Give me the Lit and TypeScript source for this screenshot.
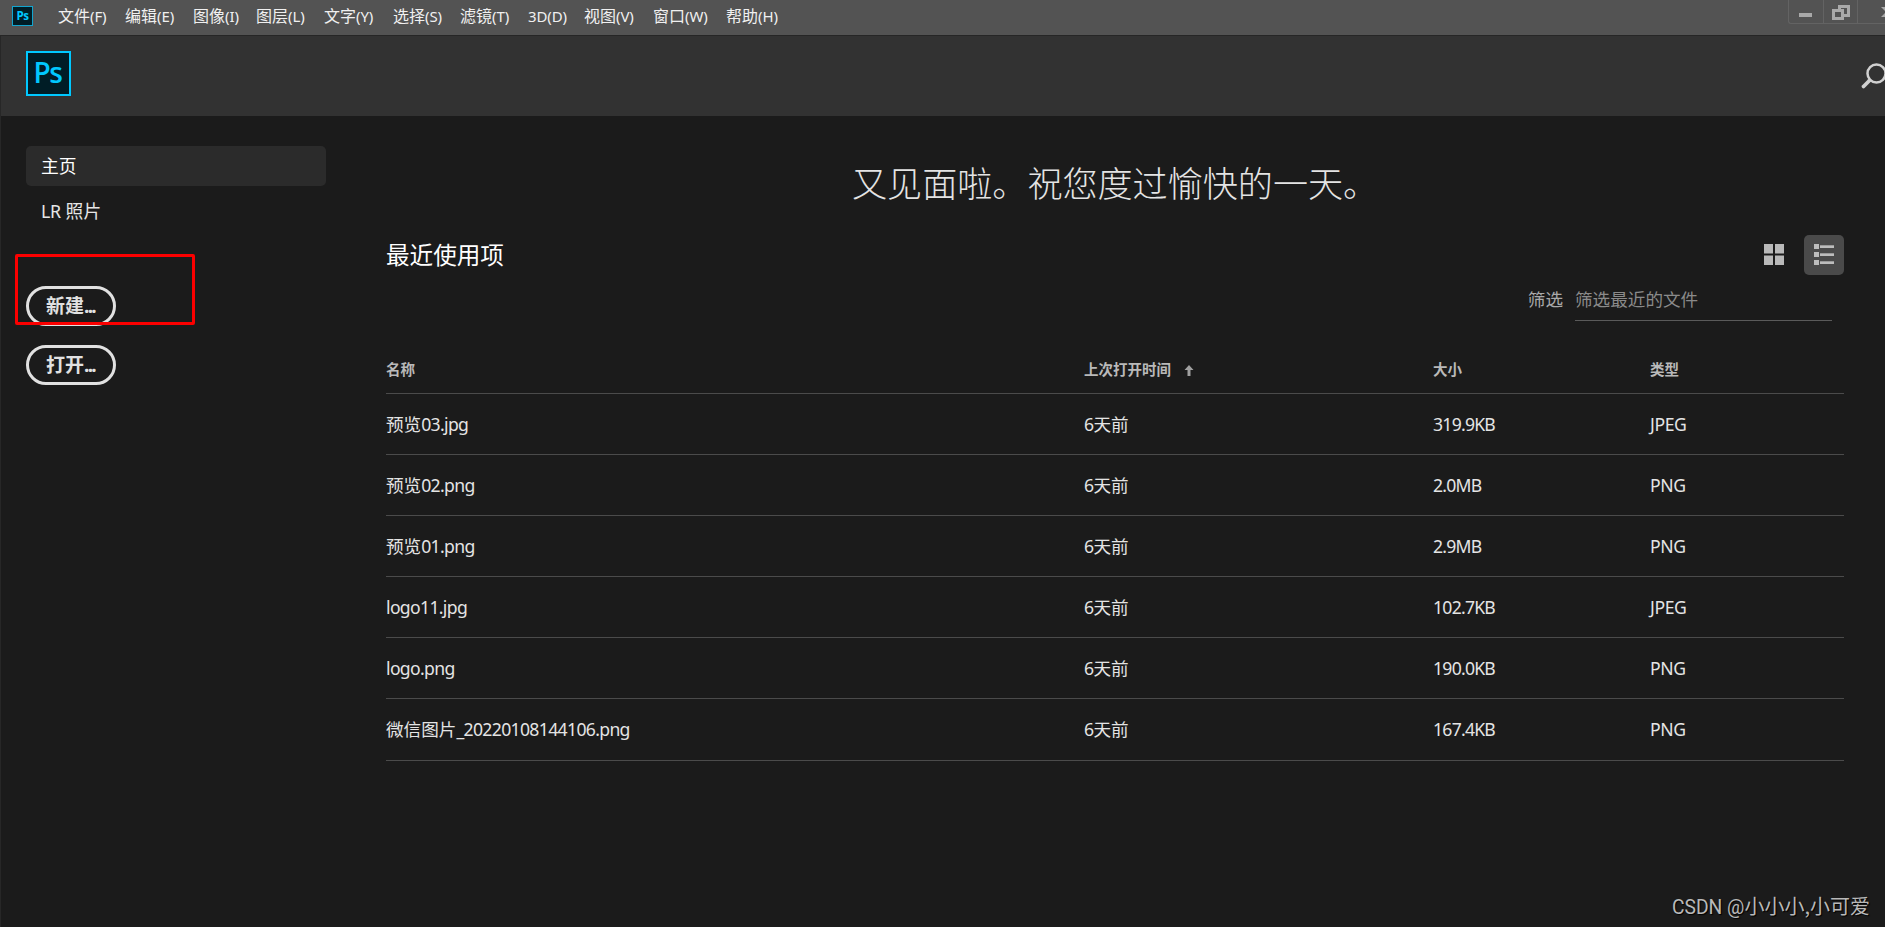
import { LitElement, html, css, svg } from "lit";
import { customElement } from "lit/decorators.js";

interface RecentFile {
  cjk: string;
  latin: string;
  size: string;
  type: string;
}

const MENU: [string, string, number][] = [
  ["文件", "(F)", 67],
  ["编辑", "(E)", 68],
  ["图像", "(I)", 63],
  ["图层", "(L)", 68],
  ["文字", "(Y)", 69],
  ["选择", "(S)", 67],
  ["滤镜", "(T)", 68],
  ["", "3D(D)", 56],
  ["视图", "(V)", 69],
  ["窗口", "(W)", 73],
  ["帮助", "(H)", 60],
];

const FILES: RecentFile[] = [
  { cjk: "预览", latin: "03.jpg", size: "319.9KB", type: "JPEG" },
  { cjk: "预览", latin: "02.png", size: "2.0MB", type: "PNG" },
  { cjk: "预览", latin: "01.png", size: "2.9MB", type: "PNG" },
  { cjk: "", latin: "logo11.jpg", size: "102.7KB", type: "JPEG" },
  { cjk: "", latin: "logo.png", size: "190.0KB", type: "PNG" },
  { cjk: "微信图片", latin: "_20220108144106.png", size: "167.4KB", type: "PNG" },
];

@customElement("app-menubar")
export class AppMenubar extends LitElement {
  static styles = css`
    :host { display: flex; box-sizing: border-box; height: 36px; flex: none; background: #535353;
      border-bottom: 1px solid #262626; overflow: hidden; }
    .logo { box-sizing: border-box; width: 21px; height: 20px; margin: 6px 25px 0 12px; flex: none;
      border: 1.5px solid #12a5cf; background: #001d26; color: #00c8ff;
      font: 700 11.5px/18px "Open Sans", sans-serif; letter-spacing: -0.5px; text-align: center; }
    .item { flex: none; white-space: nowrap; color: #f0f0f0;
      font: 16px/32px "Noto Sans", "Noto Sans CJK SC", sans-serif; }
    .key { font-size: 15px; letter-spacing: -0.1px; }
    .controls { display: flex; flex: none; box-sizing: border-box; margin-left: auto; width: 97px; height: 24px;
      border: 1px solid #636363; border-width: 0 0 1px 1px; border-bottom-left-radius: 3px; }
    .ctl { box-sizing: border-box; flex: none; border-right: 1px solid #636363; height: 23px; }
    .c1 { width: 35px; } .c2 { width: 34px; } .c3 { width: 28px; border: 0; }
    svg { display: block; }
  `;
  render() {
    return html`
      <div class="logo">Ps</div>
      ${MENU.map(([c, k, w]) => html`<div class="item" style="width:${w}px">${c}<span class="key">${k}</span></div>`)}
      <div class="controls">
        <div class="ctl c1"><svg width="34" height="23"><rect x="10" y="13" width="13" height="4" fill="#a9a9a9"/></svg></div>
        <div class="ctl c2"><svg width="33" height="23" fill="none" stroke="#a9a9a9" stroke-width="3">
          <path d="M15.5 9V6.500H24.500V15.500H20"/><rect x="9.500" y="10.500" width="9" height="8"/></svg></div>
        <div class="ctl c3"><svg width="28" height="23"><path d="M23 7h4l4 4 4-4h4l-5 5 5 5h-4l-4-4-4 4h-4l5-5z" fill="#a9a9a9"/></svg></div>
      </div>`;
  }
}

@customElement("app-sidebar")
export class AppSidebar extends LitElement {
  static styles = css`
    :host { display: block; flex: none; width: 300px; padding: 30px 0 0 25px; position: relative;
      font-family: "Noto Sans", "Noto Sans CJK SC", sans-serif; }
    .nav { box-sizing: border-box; height: 40px; margin-bottom: 5px; padding-left: 15px; border-radius: 5px;
      font-size: 17.8px; line-height: 40px; color: #e6e6e6; }
    .active { background: #2b2b2b; color: #fff; }
    .lr { letter-spacing: -0.2px; }
    .btn { display: flex; align-items: center; box-sizing: border-box; width: 90px; height: 40px; padding-left: 17px;
      border: 3px solid #e1e1e1; border-radius: 20px; color: #e1e1e1; font-weight: 700; font-size: 19px;
      line-height: 34px; white-space: nowrap; }
    .dots { letter-spacing: -1.7px; }
    .new { margin-top: 55px; }
    .open { margin-top: 19px; }
    .mark { position: absolute; box-sizing: border-box; left: 14px; top: 138px; width: 180px; height: 71px;
      border: 3px solid #fb0000; border-radius: 2px; }
  `;
  render() {
    return html`
      <div class="nav active">主页</div>
      <div class="nav"><span class="lr">LR</span> 照片</div>
      <div class="btn new">新建<span class="dots">...</span></div>
      <div class="btn open">打开<span class="dots">...</span></div>
      <div class="mark"></div>`;
  }
}

@customElement("app-recent")
export class AppRecent extends LitElement {
  static styles = css`
    :host { display: block; flex: none; width: 1458px; margin-left: 60px; color: #e4e4e4;
      font: 17.6px/24px "Noto Sans", "Noto Sans CJK SC", sans-serif; }
    .top { display: flex; align-items: center; height: 40px; }
    .title { flex: 1; font-size: 23.6px; line-height: 40px; color: #fff; }
    .view { display: flex; align-items: center; justify-content: center; width: 40px; height: 40px;
      border-radius: 5px; margin-left: 10px; }
    .view svg { margin-bottom: 1px; }
    .on { background: #4a4a4a; }
    .filter { display: flex; justify-content: flex-end; padding-right: 12px; height: 45px; }
    .label { color: #a9a9a9; line-height: 48px; margin-right: 12px; }
    .input { box-sizing: border-box; width: 257px; height: 46px; border-bottom: 1px solid #5a5a5a; color: #8a8a8a; line-height: 48px; }
    .row { display: grid; grid-template-columns: 698px 349px 217px 194px; align-items: center;
      box-sizing: border-box; height: 61px; border-bottom: 1px solid #4b4b4b; }
    .row:last-child { height: 62px; padding-bottom: 1px; }
    .head { height: 74px; padding-top: 25px; font-size: 14.5px; font-weight: 700; color: #b9b9b9; }
    .time { display: flex; align-items: center; gap: 13px; }
    .time svg { margin-top: 2px; }
    .latin { letter-spacing: -0.66px; }
    .num { letter-spacing: -0.75px; }
    .type { letter-spacing: -0.4px; }
  `;
  render() {
    return html`
      <div class="top">
        <div class="title">最近使用项</div>
        <div class="view"><svg width="20" height="21" fill="#b9b9b9">
          <path d="M0 0h9v9.500H0zM11 0h9v9.500h-9zM0 11.500h9V21H0zM11 11.500h9V21h-9z"/></svg></div>
        <div class="view on"><svg width="20" height="21" fill="#bdbdbd">
          ${[0, 8, 16].map((y) => svg`<rect x="0" y=${y} width="5" height="5"/><rect x="6" y=${y + 1.3} width="14" height="2.700"/>`)}</svg></div>
      </div>
      <div class="filter"><span class="label">筛选</span><div class="input">筛选最近的文件</div></div>
      <div class="row head">
        <div>名称</div>
        <div class="time">上次打开时间<svg width="10" height="11" fill="#a0a0a0"><path d="M5 0l4.500 5H6.500v6h-3V5H.5z"/></svg></div>
        <div>大小</div><div>类型</div>
      </div>
      ${FILES.map((f) => html`<div class="row">
        <div>${f.cjk}<span class="latin">${f.latin}</span></div>
        <div><span class="latin">6</span>天前</div>
        <div class="num">${f.size}</div>
        <div class="type">${f.type}</div>
      </div>`)}`;
  }
}

@customElement("app-root")
export class AppRoot extends LitElement {
  static styles = css`
    :host { display: flex; flex-direction: column; box-sizing: border-box; width: 100%; height: 927px;
      background: #1b1b1b; overflow: hidden; position: relative; }
    .body { flex: 1; display: flex; flex-direction: column; border-left: 1px solid #272727; min-height: 0; }
    .banner { display: flex; justify-content: space-between; box-sizing: border-box; height: 80px; flex: none;
      background: #323232; padding: 15px 0 0 25px; }
    .ps { box-sizing: border-box; width: 45px; height: 45px; border: 2px solid #00c8ff; background: #001d26;
      color: #00c8ff; font: 600 28px/38px "Open Sans", sans-serif; letter-spacing: -1.5px; padding-right: 2px; text-align: center; }
    .search { margin-top: 11px; }
    .main { display: flex; flex: 1; min-height: 0; }
    .content { display: block; }
    .hello { height: 119px; box-sizing: border-box; padding-top: 44px; padding-left: 526px; white-space: nowrap; color: #e4e4e4;
      font: 300 35.1px/44px "Noto Sans CJK SC", sans-serif; }
    .stamp { position: absolute; right: 15px; bottom: 5px; color: #b9b9b9; white-space: nowrap;
      font: 20px/28px "Noto Sans CJK SC", sans-serif; text-shadow: 1px 1px 1px #000; }
    .tag { font: 19.3px/28px Roboto, sans-serif; }
  `;
  render() {
    return html`
      <app-menubar></app-menubar>
      <div class="body">
        <div class="banner">
          <div class="ps">Ps</div>
          <svg class="search" width="25" height="30" fill="none" stroke="#d0d0d0">
            <circle cx="16.5" cy="11.500" r="9" stroke-width="2.500"/><path d="M9.500 18.500L3.500 24.500" stroke-width="3.800" stroke-linecap="round"/></svg>
        </div>
        <div class="main">
          <app-sidebar></app-sidebar>
          <div class="content">
            <div class="hello">又见面啦。祝您度过愉快的一天。</div>
            <app-recent></app-recent>
          </div>
        </div>
      </div>
      <div class="stamp"><span class="tag">CSDN @</span>小小小,小可爱</div>`;
  }
}
